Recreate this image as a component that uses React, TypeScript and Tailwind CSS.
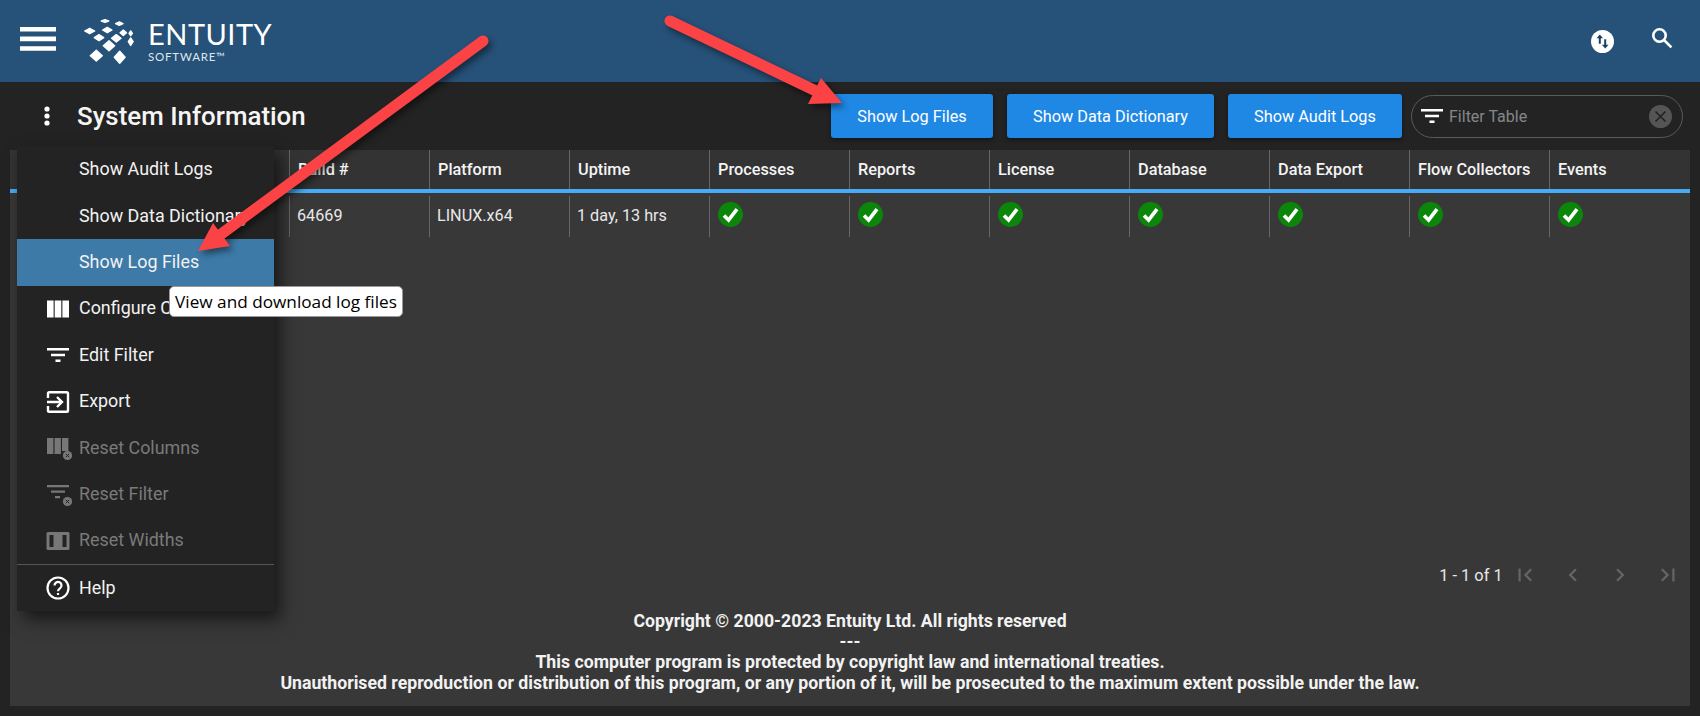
import type { ReactNode } from 'react'

const columns = ['', '', 'Build #', 'Platform', 'Uptime', 'Processes', 'Reports', 'License', 'Database', 'Data Export', 'Flow Collectors', 'Events']
const checkCols = 7

function Logo() {
  const d = [
    [26, 6, 4, 1.7], [40.3, 8.7, 4, 2], [10.7, 16, 5.3, 3], [28.3, 15, 5, 3], [44.3, 17.7, 3.5, 3], [51.7, 18.3, 2, 2.7],
    [20, 22.7, 5, 3.3], [37.3, 23.3, 5, 4], [51.7, 26.7, 2.7, 4], [30, 30.7, 6, 5.3], [17.3, 40.7, 6.3, 5.7], [40.7, 42.3, 5.7, 6.3],
  ]
  return (
    <svg width="70" height="52" viewBox="0 0 70 52" className="shrink-0">
      {d.map(([x, y, w, h], i) => (
        <polygon key={i} points={`${x - w + 0.3},${y} ${x},${y - h + 0.3} ${x + w - 0.3},${y} ${x},${y + h - 0.3}`} fill="#fff" stroke="#fff" strokeWidth="1.4" strokeLinejoin="round" />
      ))}
    </svg>
  )
}

function FilterIcon({ className = '', size = 24 }: { className?: string; size?: number }) {
  return (
    <svg width={size} height={size} viewBox="0 0 24 24" fill="currentColor" className={className}>
      <path d="M1 5h22v2.400H1zM5 10.800h14v2.400H5zM9.500 16.600h5V19h-5z" />
    </svg>
  )
}

function Badge() {
  return (
    <g>
      <circle cx="21.5" cy="20.5" r="4.6" fill="#777" />
      <path d="M19.8 18.8l3.4 3.4M23.2 18.8l-3.4 3.4" stroke="#222" strokeWidth="1" />
    </g>
  )
}

function MenuRow({ icon, label, disabled, active }: { icon?: ReactNode; label: string; disabled?: boolean; active?: boolean }) {
  return (
    <div className={`flex h-[46.4px] items-center text-[17.9px] ${active ? 'bg-[#3d7aa8]' : ''} ${disabled ? 'text-[#7a7a7a]' : 'text-[#f2f2f2]'}`}>
      <span className="flex w-[62px] shrink-0 justify-end pr-[9px]">{icon}</span>
      <span className="whitespace-nowrap">{label}</span>
    </div>
  )
}

function ActionButton({ label, width }: { label: string; width: string }) {
  return (
    <button className={`h-[44px] rounded-[3px] bg-[#1f88e5] pt-[2px] text-[16.3px] text-white shadow-[0_2px_4px_rgba(0,0,0,0.4)] ${width}`}>
      {label}
    </button>
  )
}

function Check() {
  return (
    <svg width="25" height="25" viewBox="0 0 25 25" className="mb-[5px]">
      <circle cx="12.5" cy="12.5" r="12.5" fill="#0b860b" />
      <path d="M6 13.500l4.600 4.600 8.400-11" fill="none" stroke="#fff" strokeWidth="3.600" />
    </svg>
  )
}

function PagerIcon({ d }: { d: string }) {
  return (
    <svg width="26" height="26" viewBox="0 0 24 24" fill="#666">
      <path d={d} />
    </svg>
  )
}

export default function App() {
  return (
    <div className="relative flex h-screen flex-col overflow-hidden bg-[#232323] font-['Roboto',sans-serif] text-white">
      <header className="flex h-[82px] shrink-0 items-center bg-[#265178]">
        <svg width="36" height="24" viewBox="0 0 36 24" className="ml-[20px] -mt-[4px]" fill="#fff">
          <path d="M0 0h36v4.600H0zM0 9.600h36v4.600H0zM0 19.200h36v4.600H0z" />
        </svg>
        <div className="ml-[23px] flex items-center">
          <Logo />
          <div className="-ml-[1px] mt-[1px] flex flex-col">
            <span className="font-['Lato',sans-serif] text-[29px] leading-[28px] tracking-[0.5px]">ENTUITY</span>
            <span className="mt-[3px] font-['Lato',sans-serif] text-[11.5px] leading-[12px] tracking-[0.8px] text-[#dfe6ec]">SOFTWARE™</span>
          </div>
        </div>
        <div className="ml-auto flex items-center">
          <svg width="23" height="23" viewBox="0 0 23 23" className="mr-[36px]">
            <circle cx="11.5" cy="11.5" r="11.5" fill="#fff" />
            <path d="M8.800 4.400l-3.300 3.900h2.300v5.400h2v-5.400h2.300zM14.200 18.600l3.300-3.900h-2.300V9.300h-2v5.400h-2.300z" fill="#1d3f5c" />
          </svg>
          <svg width="24" height="24" viewBox="0 0 24 24" className="mb-[6px] mr-[26px]" fill="none" stroke="#fff" strokeWidth="2.600">
            <circle cx="9.500" cy="9.500" r="6.200" />
            <path d="M14 14l7.400 7.400" />
          </svg>
        </div>
      </header>

      <div className="flex h-[68px] shrink-0 items-center pr-[17px]">
        <svg width="10" height="24" viewBox="0 0 10 24" fill="#fff" className="ml-[42px]">
          <circle cx="5" cy="5" r="2.600" />
          <circle cx="5" cy="12" r="2.600" />
          <circle cx="5" cy="19" r="2.600" />
        </svg>
        <h1 className="ml-[25px] pt-[1px] text-[25.9px] font-medium leading-none text-[#f5f5f5]">System Information</h1>
        <div className="ml-auto flex items-center">
          <ActionButton label="Show Log Files" width="w-[162px]" />
          <div className="w-[14px]" />
          <ActionButton label="Show Data Dictionary" width="w-[207px]" />
          <div className="w-[14px]" />
          <ActionButton label="Show Audit Logs" width="w-[174px]" />
          <div className="ml-[9px] flex h-[43px] w-[272px] items-center rounded-full border border-[#5a5a5a] pl-[8px] pr-[10px]">
            <FilterIcon className="text-white" />
            <input placeholder="Filter Table" className="ml-[5px] mt-[2px] w-[190px] bg-transparent text-[16px] outline-none placeholder:text-[#85888b]" />
            <span className="ml-auto flex h-[23px] w-[23px] items-center justify-center rounded-full bg-[#555]">
              <svg width="13" height="13" viewBox="0 0 13 13" stroke="#222" strokeWidth="1.600"><path d="M1.500 1.500l10 10M11.500 1.500l-10 10" /></svg>
            </span>
          </div>
        </div>
      </div>

      <main className="mx-[10px] mb-[10px] flex flex-1 flex-col bg-[#383838]">
        <div className="grid grid-cols-[139px_repeat(10,140px)_141px] border-b-4 border-[#45acf5] bg-[#333]">
          {columns.map((c, i) => (
            <div key={i} className={`flex h-[39px] items-center pl-[8px] pt-[1px] text-[16.3px] font-medium text-[#f4f4f4] ${i > 0 ? 'border-l border-[#666]' : ''}`}>
              {c}
            </div>
          ))}
        </div>
        <div className="grid grid-cols-[139px_repeat(10,140px)_141px] pt-[3px] text-[16.2px] text-[#e8e8e8]">
          <div className="h-[41px]" />
          <div className="h-[41px] border-l border-[#666]" />
          <div className="flex h-[41px] items-center border-l border-[#666] pl-[7px]">64669</div>
          <div className="flex h-[41px] items-center border-l border-[#666] pl-[7px]">LINUX.x64</div>
          <div className="flex h-[41px] items-center border-l border-[#666] pl-[7px]">1 day, 13 hrs</div>
          {Array.from({ length: checkCols }).map((_, i) => (
            <div key={i} className="flex h-[41px] items-center border-l border-[#666] pl-[8px]">
              <Check />
            </div>
          ))}
        </div>

        <div className="mt-auto flex h-[48px] items-center justify-end gap-[21.6px] pr-[9px]">
          <span className="mr-[-12px] pt-[2px] text-[16.4px] text-[#e8e8e8]">1 - 1 of 1</span>
          <PagerIcon d="M18.41 16.59L13.82 12l4.59-4.59L17 6l-6 6 6 6zM6 6h2v12H6z" />
          <PagerIcon d="M15.41 7.41L14 6l-6 6 6 6 1.41-1.41L10.83 12z" />
          <PagerIcon d="M10 6L8.59 7.41 13.17 12l-4.58 4.59L10 18l6-6z" />
          <PagerIcon d="M5.59 7.41L10.18 12l-4.59 4.59L7 18l6-6-6-6zM16 6h2v12h-2z" />
        </div>
        <footer className="mt-[12px] pb-[13px] text-center text-[17.7px] font-bold leading-[20.4px] text-[#f2f2f2]">
          <p>Copyright © 2000-2023 Entuity Ltd. All rights reserved</p>
          <p>---</p>
          <p>This computer program is protected by copyright law and international treaties.</p>
          <p>Unauthorised reproduction or distribution of this program, or any portion of it, will be prosecuted to the maximum extent possible under the law.</p>
        </footer>
      </main>

      <div className="absolute left-[17px] top-[146px] w-[257px] bg-[#232323] pt-[0.5px] shadow-[6px_8px_16px_rgba(0,0,0,0.6)]">
        <MenuRow label="Show Audit Logs" />
        <MenuRow label="Show Data Dictionary" />
        <MenuRow label="Show Log Files" active />
        <MenuRow
          label="Configure Columns"
          icon={
            <svg width="24" height="24" viewBox="0 0 24 24" fill="#fff"><path d="M1 3.500h6.600v17H1zM8.700 3.500h6.600v17H8.700zM16.400 3.500H23v17h-6.600z" /></svg>
          }
        />
        <MenuRow label="Edit Filter" icon={<FilterIcon className="text-white" />} />
        <MenuRow
          label="Export"
          icon={
            <svg width="24" height="24" viewBox="0 0 24 24" fill="none" stroke="#fff" strokeWidth="2.400"><path d="M2 8V3.500q0-1.300 1.300-1.300h17.400Q22 2.200 22 3.500v17q0 1.300-1.300 1.300H3.300Q2 21.800 2 20.500V16M1 12h14.500M11 7l5 5-5 5" /></svg>
          }
        />
        <MenuRow
          label="Reset Columns"
          disabled
          icon={
            <svg width="26" height="26" viewBox="0 0 26 26" className="-mr-[2px]"><path d="M1 3h6.400v16H1zM8.500 3h6.400v16H8.500zM16 3h6.400v13h-6.400z" fill="#777" /><Badge /></svg>
          }
        />
        <MenuRow
          label="Reset Filter"
          disabled
          icon={
            <svg width="26" height="26" viewBox="0 0 26 26" className="-mr-[2px]"><path d="M1 4h22v2.200H1zM5 9.500h14v2.200H5zM9 15h5v2.200H9z" fill="#777" /><Badge /></svg>
          }
        />
        <MenuRow
          label="Reset Widths"
          disabled
          icon={
            <svg width="24" height="24" viewBox="0 0 24 24"><rect x="0.500" y="3" width="23" height="18" rx="1.500" fill="#777" /><path d="M3.500 6H7.500v12H3.500zM16.500 6h4v12h-4z" fill="#232323" /></svg>
          }
        />
        <div className="border-t border-[#555]" />
        <MenuRow
          label="Help"
          icon={
            <svg width="24" height="24" viewBox="0 0 24 24" fill="none" stroke="#fff" strokeWidth="2.200"><circle cx="12" cy="12" r="10.500" /><path d="M8.500 9.500a3.500 3.500 0 1 1 5.500 2.800c-1.300.9-2 1.500-2 3" /><path d="M12 17v2" /></svg>
          }
        />
      </div>

      <div className="absolute left-[169px] top-[286px] flex h-[31px] w-[234px] items-center justify-center rounded-[5px] border border-[#999] bg-white font-['Open_Sans',sans-serif] text-[17.2px] text-black">
        View and download log files
      </div>

      <svg width="1700" height="716" className="pointer-events-none absolute left-0 top-0 drop-shadow-[3px_4px_3px_rgba(0,0,0,0.45)]">
        <path d="M670 21L818 92" stroke="#fb4346" strokeWidth="11" strokeLinecap="round" />
        <polygon points="842,103 821,78 808,104" fill="#fb4346" />
        <path d="M483 41L220 235" stroke="#fb4346" strokeWidth="11" strokeLinecap="round" />
        <polygon points="198,251 213,223 230,246" fill="#fb4346" />
      </svg>
    </div>
  )
}
